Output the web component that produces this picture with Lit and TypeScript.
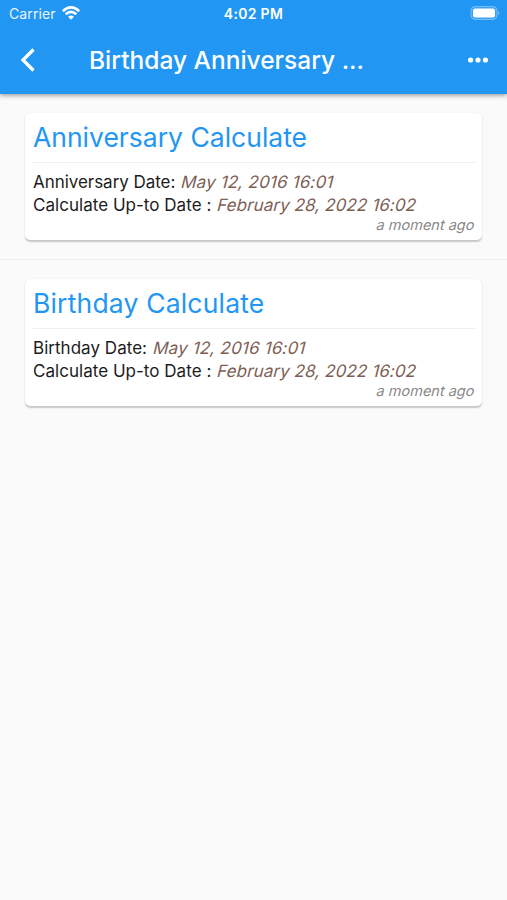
import { LitElement, html, css } from "lit";
import { customElement } from "lit/decorators.js";

interface Entry {
  kind: string;
  title: string;
  label: string;
  date: string;
  upTo: string;
  ago: string;
}

const ENTRIES: Entry[] = [
  { kind: "anniversary", title: "Anniversary Calculate", label: "Anniversary Date:", date: "May 12, 2016 16:01", upTo: "February 28, 2022 16:02", ago: "a moment ago" },
  { kind: "birthday", title: "Birthday Calculate", label: "Birthday Date:", date: "May 12, 2016 16:01", upTo: "February 28, 2022 16:02", ago: "a moment ago" },
];

@customElement("app-root")
export class AppRoot extends LitElement {
  static styles = css`
    :host { display: block; height: 900px; overflow: hidden; background: #fafafa; font-family: Inter, "Liberation Sans", sans-serif; color: #1c1c1c; }
    * { box-sizing: border-box; }
    header { height: 94px; background: #2196f3; color: #fff; box-shadow: 0 1px 5px rgba(0,0,0,.45); position: relative; }
    .status { height: 27px; display: grid; grid-template-columns: 1fr auto 1fr; align-items: center; font-size: 14px; padding: 0 6px 0 9px; }
    .carrier { display: flex; align-items: center; gap: 6px; letter-spacing: .12px; color: #e9f5fe; }
    .wifi { margin-top: -1px; }
    .time { font-weight: 600; font-size: 14px; letter-spacing: .3px; margin-left: -3px; }
    .battery { justify-self: end; display: block; margin-top: -1px; }
    .bar { height: 65px; display: flex; align-items: center; padding: 0 19px 0 20px; }
    .back { width: 16px; height: 24px; margin-right: 53px; }
    h1 { margin: 0; font-size: 24.5px; font-weight: 500; line-height: 32px; flex: 1; white-space: pre; }
    svg { display: block; }
    .item { height: 166px; padding: 19px 25px 0; }
    .anniversary { border-bottom: 1px solid #eeeeee; }
    .card { height: 127px; background: #fff; border-radius: 5px; padding: 0 6px 0 8px; box-shadow: 0 1.5px 1.5px rgba(0,0,0,.2), 0 0 1px rgba(0,0,0,.08); display: flex; flex-direction: column; }
    h2 { margin: 0; height: 50px; line-height: 48px; font-size: 26.5px; font-weight: 400; color: #2196f3; border-bottom: 1px solid #f0f0f0; white-space: nowrap; }
    .birthday h2 { letter-spacing: .18px; }
    .line { height: 23px; line-height: 23px; font-size: 17px; letter-spacing: .09px; white-space: pre; }
    .first { margin-top: 8px; }
    .label { letter-spacing: .03px; }
    .anniversary .first .label { letter-spacing: -.04px; }
    .slanted { display: inline-block; color: #7d5f56; transform: skewX(-14deg); transform-origin: 0 75%; }
    .first .slanted { letter-spacing: .17px; }
    .ago { height: 16px; line-height: 15px; font-size: 14.5px; text-align: right; padding-right: 2px; }
    .ago .slanted { color: #888; }
  `;

  private card(e: Entry) {
    return html`<section class="item ${e.kind}">
      <article class="card">
        <h2>${e.title}</h2>
        <div class="line first"><span class="label">${e.label} </span><span class="slanted">${e.date}</span></div>
        <div class="line"><span class="label">Calculate Up-to Date : </span><span class="slanted">${e.upTo}</span></div>
        <div class="ago"><span class="slanted">${e.ago}</span></div>
      </article>
    </section>`;
  }

  render() {
    return html`
      <header>
        <div class="status">
          <div class="carrier"><span>Carrier</span>
            <svg class="wifi" width="18" height="14" viewBox="0 0 18 14" fill="none" stroke="#fff" stroke-width="2.6"><path d="M.8 5.2Q9-2.4 17.2 5.2M3.7 8.3Q9 3.4 14.3 8.3"/><path d="M6 10.7Q9 8.3 12 10.7L9 13.8Z" fill="#fff" stroke="none"/></svg>
          </div>
          <div class="time">4:02 PM</div>
          <svg class="battery" width="31" height="14" viewBox="0 0 31 14"><rect x="1" y=".5" width="26" height="13" rx="4" fill="#fff" fill-opacity=".12" stroke="#fff" stroke-opacity=".35"/><rect x="3" y="2.5" width="22" height="9" rx="2" fill="#fff"/><path d="M28.2 5Q30.4 7 28.2 9Z" fill="#fff" fill-opacity=".45"/></svg>
        </div>
        <div class="bar">
          <svg class="back" viewBox="0 0 16 24" fill="none" stroke="#fff" stroke-width="3.3"><path d="M13.5 1.5L3 12L13.5 22.5"/></svg>
          <h1>Birthday Anniversary ...</h1>
          <svg width="20" height="6" viewBox="0 0 20 6" fill="#fff"><circle cx="2.6" cy="3" r="2.6"/><circle cx="10" cy="3" r="2.6"/><circle cx="17.4" cy="3" r="2.6"/></svg>
        </div>
      </header>
      <main>${ENTRIES.map((e) => this.card(e))}</main>`;
  }
}
